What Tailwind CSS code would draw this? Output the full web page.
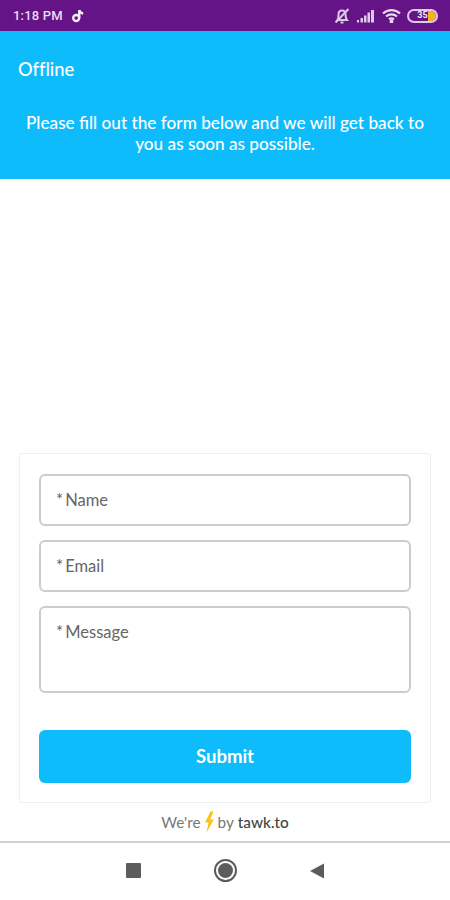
<!DOCTYPE html>
<html lang="en">
<head>
  <meta charset="UTF-8" />
  <meta name="viewport" content="width=device-width, initial-scale=1.0" />
  <title>Offline</title>
  <script src="https://cdn.jsdelivr.net/npm/@tailwindcss/browser@4"></script>
</head>
<body class="bg-white font-['Lato',sans-serif] w-[450px] h-[900px] overflow-hidden flex flex-col">
  <!-- Status bar -->
  <div class="h-[31px] bg-[#651488] flex items-center justify-between pl-[13px] pr-[12px] text-[#eadcf0] shrink-0">
    <div class="flex items-center gap-[8px]">
      <span class="font-['Roboto',sans-serif] font-medium text-[13px] tracking-[0.2px]">1:18 PM</span>
      <svg width="14" height="15" viewBox="0 0 14 15" fill="none" stroke="#f3eaf6" stroke-width="2.4">
        <circle cx="5.2" cy="10" r="3" />
        <path d="M8.2 10V2.2c.6 2 2 3 4 3.3" />
      </svg>
    </div>
    <div class="flex items-center gap-[6px]">
      <svg width="18" height="18" viewBox="0 0 18 18" fill="none" stroke="#dccbe5" stroke-width="2">
        <path d="M4.500 13c1-1.500 1-3.500 1-5.500 0-2.300 1.500-4 3.500-4s3.500 1.700 3.500 4c0 2 .3 4 1.500 5.500z" />
        <path d="M7.500 15.500h3" />
        <path d="M2.500 15.500 15.500 2" />
      </svg>
      <svg width="18" height="14" viewBox="0 0 18 14" fill="#dccbe5">
        <rect x="0" y="11" width="2" height="2.500" />
        <rect x="3.500" y="9" width="2.500" height="4.500" />
        <rect x="7" y="6.500" width="2.500" height="7" />
        <rect x="10.500" y="3.500" width="2.500" height="10" />
        <rect x="14" y="1" width="3" height="12.500" />
      </svg>
      <svg class="ml-[1px]" width="19" height="15" viewBox="0 0 19 15" fill="none" stroke="#e6d9ec" stroke-width="2.200">
        <path d="M1 5.500c5-4.500 12-4.500 17 0" />
        <path d="M4 8.500c3.200-2.800 7.800-2.800 11 0" />
        <path d="M7 11.300c1.500-1.200 3.500-1.200 5 0" />
        <circle cx="9.500" cy="13.500" r="0.800" fill="#e6d9ec" />
      </svg>
      <div class="relative w-[31px] h-[14px] rounded-full border-2 border-[#dccbe5] overflow-hidden flex items-center justify-center">
        <div class="absolute right-0 top-0 bottom-0 w-[8px] bg-[#f2b02c]"></div>
        <span class="relative font-['Roboto',sans-serif] font-bold text-[9px] leading-none text-[#f3eaf6]">35</span>
      </div>
    </div>
  </div>

  <!-- Header -->
  <div class="h-[148px] bg-[#0fbcfb] text-white shrink-0 px-[18px] pt-[28px]">
    <div class="text-[18.300px] leading-[20px] [font-variant-ligatures:none] font-medium">Offline</div>
    <p class="mt-[33px] px-[6px] text-center text-[17.200px] leading-[21px] font-medium">Please fill out the form below and we will get back to you as soon as possible.</p>
  </div>

  <!-- Form -->
  <div class="flex-1 flex flex-col justify-end">
    <div class="mx-[19px] border border-[#f0f0f0] rounded-[3px] px-[19px] pt-[20px] pb-[19px] flex flex-col">
      <div class="h-[52px] border-2 border-[#cccccc] rounded-[6px] px-[15px] flex items-center text-[16.500px] [word-spacing:-2px] text-[#666666]">* Name</div>
      <div class="mt-[14px] h-[52px] border-2 border-[#cccccc] rounded-[6px] px-[15px] flex items-center text-[16.500px] [word-spacing:-2px] text-[#666666]">* Email</div>
      <div class="mt-[14px] h-[87px] border-2 border-[#cccccc] rounded-[6px] px-[15px] pt-[14px] text-[16.500px] [word-spacing:-2px] leading-[20px] text-[#666666]">* Message</div>
      <div class="mt-[37px] h-[53px] bg-[#0fbcfb] rounded-[6px] flex items-center justify-center text-white font-bold text-[18.500px]">Submit</div>
    </div>
    <div class="h-[38px] flex items-center justify-center text-[15.300px] text-[#777777]">
      <span>We're</span>
      <svg class="mx-[3px]" width="11" height="24" viewBox="0 0 11 22" fill="#fcc419">
        <path d="M6.500 0.500 1 11.500h3.500L2.500 21.500 10 8.500H6.200L9.500 0.500z" />
      </svg>
      <span>by</span>
      <span class="ml-[4px] text-[#444444] font-medium">tawk.to</span>
    </div>
  </div>

  <!-- Navigation bar -->
  <div class="h-[59px] border-t-2 border-[#cfcfcf] bg-white shrink-0 flex items-center justify-center gap-[73px] pb-[2px]">
    <div class="w-[15px] h-[15px] bg-[#5c5c5c] rounded-[1px]"></div>
    <div class="w-[23px] h-[23px] rounded-full border-2 border-[#5c5c5c] flex items-center justify-center">
      <div class="w-[15px] h-[15px] rounded-full bg-[#5c5c5c]"></div>
    </div>
    <svg width="14" height="16" viewBox="0 0 14 16" fill="#5c5c5c">
      <path d="M14 0.500V15.500L0 8z" />
    </svg>
  </div>
</body>
</html>
